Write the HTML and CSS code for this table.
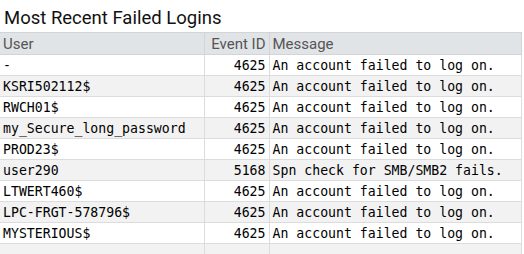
FILE: index.html
```html
<!DOCTYPE html>
<html lang="en">
<head>
    <meta charset="UTF-8">
    <meta name="viewport" content="width=device-width, initial-scale=1.0">
    <title>Most Recent Failed Logins</title>
    <link rel="stylesheet" href="styles.css">
</head>
<body>
    <div class="panel">
        <h2 class="panel-title">Most Recent Failed Logins</h2>
        <table class="logins">
            <colgroup>
                <col class="col-user">
                <col class="col-event">
                <col class="col-msg">
            </colgroup>
            <thead>
                <tr>
                    <th>User</th>
                    <th class="num">Event ID</th>
                    <th>Message</th>
                </tr>
            </thead>
            <tbody>
                <tr><td>-</td><td class="num">4625</td><td>An account failed to log on.</td></tr>
                <tr><td>KSRI502112$</td><td class="num">4625</td><td>An account failed to log on.</td></tr>
                <tr><td>RWCH01$</td><td class="num">4625</td><td>An account failed to log on.</td></tr>
                <tr><td>my_Secure_long_password</td><td class="num">4625</td><td>An account failed to log on.</td></tr>
                <tr><td>PROD23$</td><td class="num">4625</td><td>An account failed to log on.</td></tr>
                <tr><td>user290</td><td class="num">5168</td><td>Spn check for SMB/SMB2 fails.</td></tr>
                <tr><td>LTWERT460$</td><td class="num">4625</td><td>An account failed to log on.</td></tr>
                <tr><td>LPC-FRGT-578796$</td><td class="num">4625</td><td>An account failed to log on.</td></tr>
                <tr><td>MYSTERIOUS$</td><td class="num">4625</td><td>An account failed to log on.</td></tr>
                <tr class="empty"><td></td><td></td><td></td></tr>
            </tbody>
        </table>
    </div>
</body>
</html>
```

FILE: styles.css
```css
body {
    margin: 0;
    background: #fff;
    font-family: Roboto, "Noto Sans", sans-serif;
    color: #111;
    overflow: hidden;
}
.panel {
    width: 522px;
}
.panel-title {
    font-size: 18.5px;
    font-weight: 400;
    margin: 0;
    padding: 7px 4px 3px;
    line-height: 22px;
    color: #111;
}
.logins {
    width: 522px;
    border-collapse: collapse;
    table-layout: fixed;
}
.col-user { width: 204px; }
.col-event { width: 65px; }
.logins th {
    background: #e1e4e7;
    color: #555;
    font-weight: 400;
    font-size: 15px;
    text-align: left;
    height: 21px;
    padding: 0 3px;
    border: 1px solid #d2d5d8;
    border-left: none;
    white-space: nowrap;
}
.logins td {
    font-family: "DejaVu Sans Mono", monospace;
    font-size: 13.2px;
    height: 20px;
    padding: 0 3px;
    border: 1px solid #dcdcdc;
    border-left: none;
    color: #000;
    white-space: nowrap;
}
.logins tbody tr:nth-child(even) td {
    background: #f2f2f2;
}
.logins .num {
    text-align: right;
}
.logins tr.empty td {
    background: #fff;
}
```
